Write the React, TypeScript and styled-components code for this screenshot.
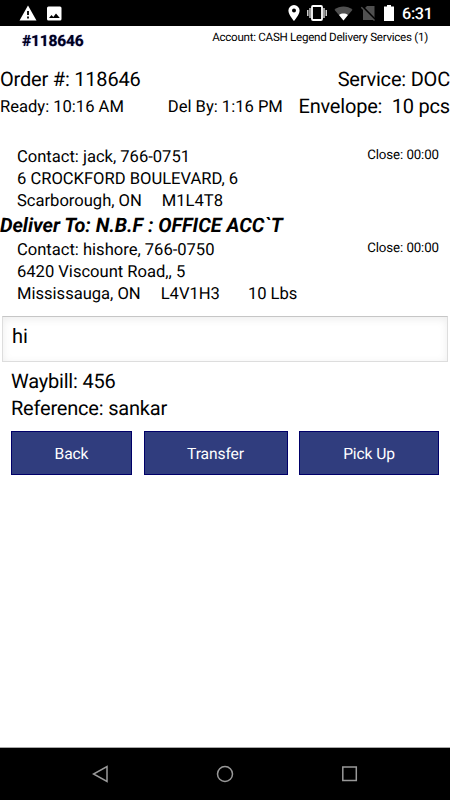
import React from "react";
import styled, { createGlobalStyle } from "styled-components";

const GlobalStyle = createGlobalStyle`
  * { box-sizing: border-box; }
  body { margin: 0; background: #fff; text-rendering: geometricPrecision; }
`;

const Screen = styled.div`
  width: 450px;
  height: 800px;
  display: flex;
  flex-direction: column;
  overflow: hidden;
  background: #fff;
  color: #000;
  font-family: Roboto, sans-serif;
`;

const StatusBar = styled.header`
  height: 26px;
  flex: none;
  background: #000;
  color: #fff;
  svg { display: block; }
`;

const StatusContent = styled.div`
  display: flex;
  justify-content: space-between;
  align-items: center;
  height: 26px;
  padding: 0 17px 0 19px;
`;

const IconGroup = styled.div<{ $gap: number }>`
  display: flex;
  align-items: center;
  gap: ${(p) => p.$gap}px;
`;

const Clock = styled.time`
  width: 31px;
  font-size: 16.2px;
  font-weight: 500;
  letter-spacing: -0.3px;
  line-height: 26px;
  white-space: nowrap;
  padding-top: 2px;
`;

const TitleRow = styled.div`
  display: flex;
  justify-content: space-between;
  height: 39px;
  padding: 0 22px;
`;

const OrderTag = styled.h1`
  margin: 0;
  font-size: 15.6px;
  font-weight: 700;
  letter-spacing: -0.2px;
  line-height: 30px;
  color: #00001c;
  text-shadow: 0 0 1px rgba(0, 0, 139, 0.6);
`;

const Account = styled.div`
  font-size: 11.6px;
  letter-spacing: -0.27px;
  line-height: 23px;
  white-space: nowrap;
`;

const Row = styled.div<{ $height: number; $indent?: number }>`
  display: flex;
  align-items: center;
  justify-content: space-between;
  flex: none;
  height: ${(p) => p.$height}px;
  padding: 0 ${(p) => (p.$indent ? 11 : 0)}px 0 ${(p) => p.$indent ?? 0}px;
`;

const Text = styled.span<{ $large?: boolean; $gap?: number }>`
  font-size: ${(p) => (p.$large ? 20 : 16.6)}px;
  letter-spacing: ${(p) => (p.$large ? -0.2 : -0.02)}px;
  margin-left: ${(p) => p.$gap ?? 0}px;
  line-height: 1.2;
  white-space: pre;
`;

const Parts = styled.div<{ $drop?: number }>`
  display: flex;
  padding-top: ${(p) => p.$drop ?? 0}px;
`;

const CloseTime = styled.span`
  font-size: 13.3px;
  letter-spacing: -0.1px;
  line-height: 1.2;
  padding-bottom: 4px;
  white-space: nowrap;
`;

const Stop = styled.section<{ $drop?: number }>`
  display: flex;
  flex-direction: column;
  padding-top: ${(p) => p.$drop ?? 0}px;
`;

const Deliver = styled.h2`
  margin: 0;
  height: 25px;
  font-size: 19.9px;
  font-weight: 700;
  font-style: italic;
  letter-spacing: -0.05px;
  line-height: 25px;
  white-space: nowrap;
`;

const Note = styled.input`
  flex: none;
  width: 446px;
  height: 46px;
  margin: 10px 2px 6px;
  padding: 0 9px 6px;
  border: 1px solid #ddd;
  border-top-color: #c6c6c6;
  border-radius: 0;
  outline: 0;
  background: #fff;
  box-shadow: inset 0 2px 8px rgba(0, 0, 0, 0.08);
  font: 20px Roboto, sans-serif;
  text-rendering: geometricPrecision;
  color: #000;
`;

const Actions = styled.div`
  display: grid;
  grid-template-columns: 121px 144px 140px;
  column-gap: 11.5px;
  padding: 10px 11px 0 11px;
`;

const Button = styled.button`
  height: 44px;
  padding: 1px 0 0;
  border: 1px solid #000069;
  border-radius: 0;
  background: #303d7e;
  color: #fff;
  font: 15.6px Roboto, sans-serif;
  letter-spacing: -0.1px;
  text-rendering: geometricPrecision;
`;

const NavBar = styled.nav`
  display: flex;
  justify-content: space-between;
  align-items: center;
  height: 53px;
  margin-top: auto;
  padding: 0 92px;
  border-top: 1px solid #a8a8a8;
  background: #000;
  svg { display: block; fill: none; stroke: #999; stroke-width: 1.5; }
`;

const StatusIcons = () => (
  <IconGroup $gap={7}>
    <svg width="12" height="16" viewBox="0 0 12 16">
      <path fill="#fff" fillRule="evenodd" d="M6 0A5.6 5.6 0 0 0 .4 5.6C.4 10 6 16 6 16s5.6-6 5.6-10.400A5.600 5.600 0 0 0 6 0Zm0 3.600a2 2 0 1 1 0 4 2 2 0 0 1 0-4Z" />
    </svg>
    <svg width="20" height="16" viewBox="0 0 20 16">
      <rect x="5" y="1" width="10" height="14" rx="1" fill="none" stroke="#fff" strokeWidth="1.800" />
      <path d="M3 3v10M17 3v10M.8 5v6M19.200 5v6" stroke="#fff" strokeWidth="1.200" />
    </svg>
    <svg width="19" height="16" viewBox="0 0 20 16">
      <path d="M.5 4.500C6-.1 14-.1 19.500 4.500L10 16Z" fill="#505050" />
      <path d="M5.300 10C8 8 12 8 14.700 10L10 16Z" fill="#fff" />
    </svg>
    <svg width="16" height="16" viewBox="0 0 16 16">
      <path d="M7 1h7.500v14H3V5Z" fill="#505050" />
      <path d="M2.200 1.600 15.500 15" stroke="#000" strokeWidth="2.200" />
      <path d="M1.300 2.200 14.500 15.500" stroke="#505050" strokeWidth="1.400" />
    </svg>
    <svg width="12" height="16" viewBox="0 0 12 16">
      <path d="M4 0h4v1.600h3V16H1V1.600h3Z" fill="#fff" />
    </svg>
    <Clock>6:31</Clock>
  </IconGroup>
);

export default function App() {
  return (
    <Screen>
      <GlobalStyle />
      <StatusBar>
        <StatusContent>
          <IconGroup $gap={9}>
            <svg width="18" height="16" viewBox="0 0 18 16">
              <path d="M9 .5 17.500 15.500H.5Z" fill="#fff" />
              <path d="M9 6v4M9 11.500v2" stroke="#000" strokeWidth="1.800" />
            </svg>
            <svg width="16" height="15" viewBox="0 0 16 15">
              <rect x="1" y=".5" width="14.500" height="14" rx="1.500" fill="#fff" />
              <path d="M3 12 5.500 9l1.800 2L10 7.500l3.800 4.500Z" fill="#000" />
            </svg>
          </IconGroup>
          <StatusIcons />
        </StatusContent>
      </StatusBar>

      <TitleRow>
        <OrderTag>#118646</OrderTag>
        <Account>Account: CASH Legend Delivery Services (1)</Account>
      </TitleRow>
      <Row $height={27}>
        <Text $large>Order #: 118646</Text>
        <Text $large>Service: DOC</Text>
      </Row>
      <Row $height={28}>
        <Parts $drop={3}>
          <Text>Ready: 10:16 AM</Text>
          <Text $gap={44}>Del By: 1:16 PM</Text>
        </Parts>
        <Text $large>{"Envelope:  10 pcs"}</Text>
      </Row>

      <Row $height={27} />
      <Stop>
        <Row $height={22} $indent={17}>
          <Text>Contact: jack, 766-0751</Text>
          <CloseTime>Close: 00:00</CloseTime>
        </Row>
        <Row $height={22} $indent={17}>
          <Text>6 CROCKFORD BOULEVARD, 6</Text>
        </Row>
        <Row $height={22} $indent={17}>
          <Parts>
            <Text>Scarborough, ON</Text>
            <Text $gap={20}>M1L4T8</Text>
          </Parts>
        </Row>
      </Stop>
      <Deliver>Deliver To: N.B.F : OFFICE ACC`T</Deliver>
      <Stop $drop={1}>
        <Row $height={23} $indent={17}>
          <Text>Contact: hishore, 766-0750</Text>
          <CloseTime>Close: 00:00</CloseTime>
        </Row>
        <Row $height={22} $indent={17}>
          <Text>6420 Viscount Road,, 5</Text>
        </Row>
        <Row $height={22} $indent={17}>
          <Parts>
            <Text>Mississauga, ON</Text>
            <Text $gap={20}>L4V1H3</Text>
            <Text $gap={28}>10 Lbs</Text>
          </Parts>
        </Row>
      </Stop>

      <Note defaultValue="hi" aria-label="Note" />
      <Row $height={26} $indent={11}>
        <Text $large>Waybill: 456</Text>
      </Row>
      <Row $height={27} $indent={11}>
        <Text $large>Reference: sankar</Text>
      </Row>
      <Actions>
        <Button>Back</Button>
        <Button>Transfer</Button>
        <Button>Pick Up</Button>
      </Actions>

      <NavBar>
        <svg width="17" height="18" viewBox="0 0 17 18"><path d="M15 1.500v15L1.500 9Z" /></svg>
        <svg width="18" height="18" viewBox="0 0 18 18"><circle cx="9" cy="9" r="7.500" /></svg>
        <svg width="17" height="18" viewBox="0 0 17 18"><rect x="1.800" y="2" width="13.500" height="13.500" /></svg>
      </NavBar>
    </Screen>
  );
}
